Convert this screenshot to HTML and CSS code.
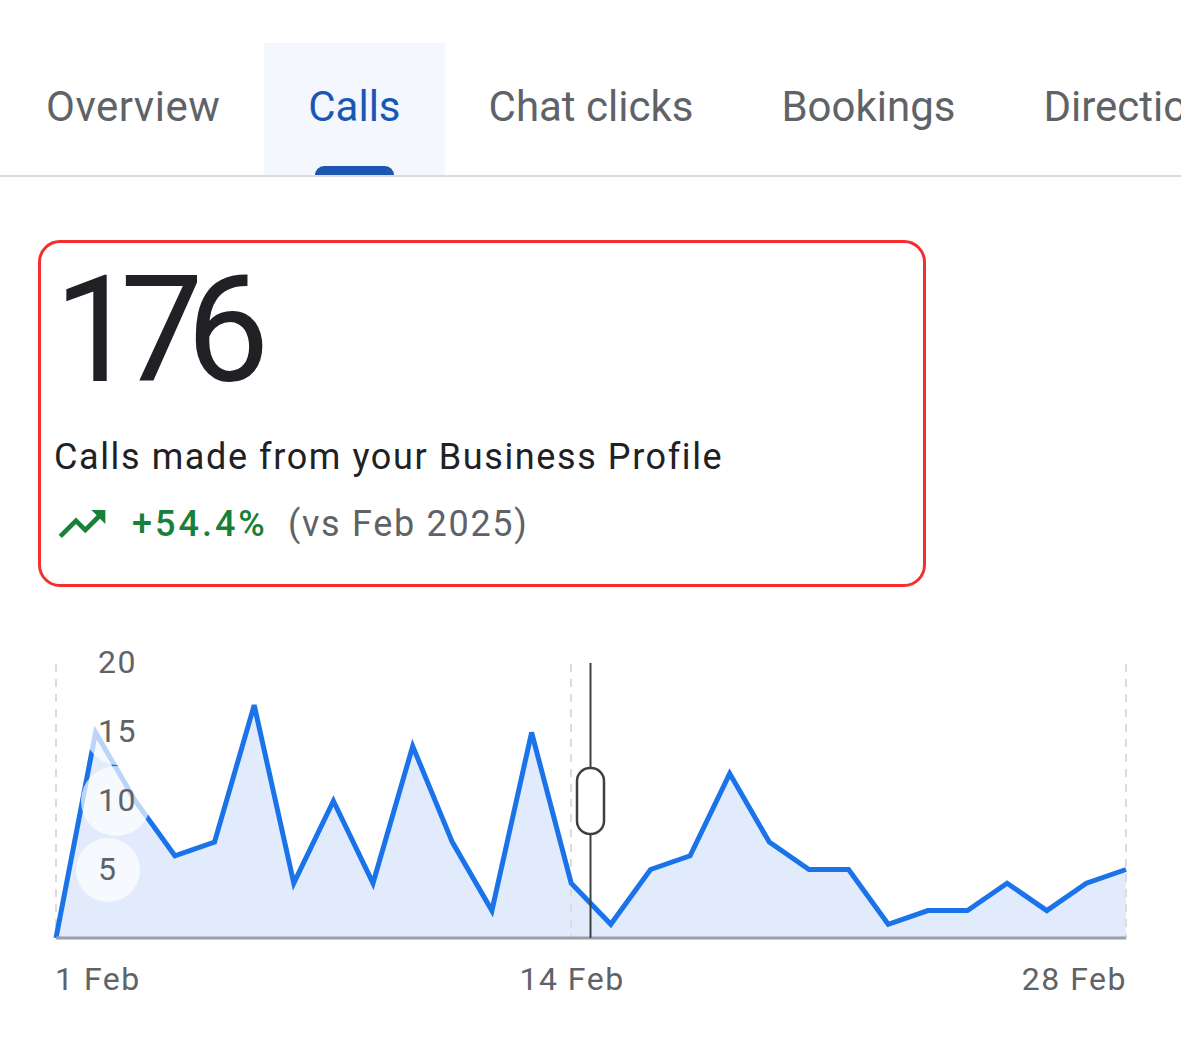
FILE: index.html
```html
<!DOCTYPE html>
<html lang="en">

<head>
    <meta charset="UTF-8">
    <title>Performance - Calls</title>
    <link rel="stylesheet" href="styles.css">
</head>

<body>
    <nav class="tabs">
        <div class="tab">Overview</div>
        <div class="tab active">Calls</div>
        <div class="tab">Chat clicks</div>
        <div class="tab">Bookings</div>
        <div class="tab">Directions</div>
    </nav>

    <section class="summary">
        <div class="total">176</div>
        <div class="caption">Calls made from your Business Profile</div>
        <div class="change">
            <svg class="trend-icon" viewBox="0 0 24 24">
                <path d="M16 6l2.29 2.29-4.88 4.88-4-4L2 16.59 3.41 18l6-6 4 4 6.3-6.29L22 12V6z" />
            </svg>
            <span class="change-value">+54.4%</span>
            <span class="change-period">(vs Feb 2025)</span>
        </div>
    </section>

    <svg class="chart" width="1181" height="400" viewBox="0 640 1181 400">
        <!-- area under the line -->
        <polygon class="area" points="56,937 56,937 95.6,731.5 135.3,800 174.9,854.8 214.5,841.1 254.2,704.1 293.8,882.2 333.4,800 373,882.2 412.7,745.2 452.3,841.1 491.9,909.6 531.6,731.5 571.2,882.2 610.8,923.3 650.5,868.5 690.1,854.8 729.7,772.6 769.3,841.1 809,868.5 848.6,868.5 888.2,923.3 927.9,909.6 967.5,909.6 1007.1,882.2 1046.8,909.6 1086.4,882.2 1126,868.5 1126,937" />

        <!-- week markers -->
        <line class="grid" x1="56" y1="663" x2="56" y2="937" />
        <line class="grid" x1="571" y1="663" x2="571" y2="937" />
        <line class="grid" x1="1126" y1="663" x2="1126" y2="937" />

        <polyline class="line" points="56,937 95.6,731.5 135.3,800 174.9,854.8 214.5,841.1 254.2,704.1 293.8,882.2 333.4,800 373,882.2 412.7,745.2 452.3,841.1 491.9,909.6 531.6,731.5 571.2,882.2 610.8,923.3 650.5,868.5 690.1,854.8 729.7,772.6 769.3,841.1 809,868.5 848.6,868.5 888.2,923.3 927.9,909.6 967.5,909.6 1007.1,882.2 1046.8,909.6 1086.4,882.2 1126,868.5" />

        <line class="axis" x1="56" y1="937" x2="1126" y2="937" />

        <!-- y axis labels -->
        <circle class="label-bg" cx="118" cy="731" r="33" />
        <circle class="label-bg" cx="116" cy="800" r="35" />
        <circle class="label-bg" cx="108" cy="869" r="32" />
        <text class="tick" x="98" y="672">20</text>
        <text class="tick" x="98" y="741">15</text>
        <text class="tick" x="98" y="810">10</text>
        <text class="tick" x="98" y="879">5</text>

        <!-- x axis labels -->
        <text class="tick" x="55" y="989">1 Feb</text>
        <text class="tick" x="572" y="989" text-anchor="middle">14 Feb</text>
        <text class="tick" x="1127" y="989" text-anchor="end">28 Feb</text>

        <!-- hover cursor -->
        <line class="cursor" x1="590.5" y1="662" x2="590.5" y2="767" />
        <line class="cursor" x1="590.5" y1="833" x2="590.5" y2="937" />
        <rect class="handle" x="577" y="767" width="27" height="66" rx="13" />
    </svg>
</body>

</html>
```

FILE: styles.css
```css
body {
    margin: 0;
    font-family: Roboto, "Noto Sans", sans-serif;
    color: #202124;
    background: #fff;
}

.tabs {
    display: flex;
    margin-top: 43px;
    padding-left: 2px;
    border-bottom: 2px solid #dadce0;
    overflow: hidden;
    white-space: nowrap;
}

.tab {
    position: relative;
    flex-shrink: 0;
    height: 132px;
    padding: 0 44px 4px;
    box-sizing: border-box;
    display: flex;
    align-items: center;
    font-size: 42px;
    line-height: 1;
    color: #5f6368;
}

.tab:first-child {
    letter-spacing: 0.5px;
}

.tab.active {
    background: #f4f8fe;
    color: #1a57b5;
}

.tab.active::after {
    content: "";
    position: absolute;
    left: 50%;
    bottom: 0;
    width: 79px;
    height: 9px;
    margin-left: -39px;
    border-radius: 9px 9px 0 0;
    background: #1b56b0;
}

.summary {
    width: 888px;
    box-sizing: border-box;
    margin: 63px 0 0 38px;
    padding: 12px 13px 32px;
    border: 3px solid #f52f2f;
    border-radius: 22px;
}

.total {
    font-size: 148px;
    line-height: 152px;
    letter-spacing: -17px;
    color: #202124;
}

.caption {
    margin-top: 28px;
    font-size: 36px;
    line-height: 44px;
    letter-spacing: 1.6px;
    color: #202124;
}

.change {
    display: flex;
    align-items: center;
    margin-top: 17px;
    font-size: 36px;
    line-height: 44px;
}

.trend-icon {
    width: 56px;
    height: 56px;
    fill: #188038;
}

.change-value {
    margin-left: 22px;
    font-weight: 500;
    letter-spacing: 3px;
    color: #188038;
}

.change-period {
    margin-left: 20px;
    letter-spacing: 1.7px;
    color: #5f6368;
}

.chart {
    display: block;
    margin-top: 54px;
}

.area {
    fill: #e1ebfb;
}

.grid {
    stroke: #dadce0;
    stroke-width: 2;
    stroke-dasharray: 8 7;
}

.line {
    fill: none;
    stroke: #1a73e8;
    stroke-width: 5;
    stroke-linejoin: miter;
}

.axis {
    stroke: #9aa0a6;
    stroke-width: 3;
}

.label-bg {
    fill: #fff;
    opacity: 0.7;
}

.tick {
    font-family: Roboto, sans-serif;
    font-size: 32px;
    letter-spacing: 1.5px;
    fill: #5f6368;
}

.cursor {
    stroke: #3c4043;
    stroke-width: 2;
}

.handle {
    fill: #fff;
    stroke: #3c4043;
    stroke-width: 2.5;
}
```
